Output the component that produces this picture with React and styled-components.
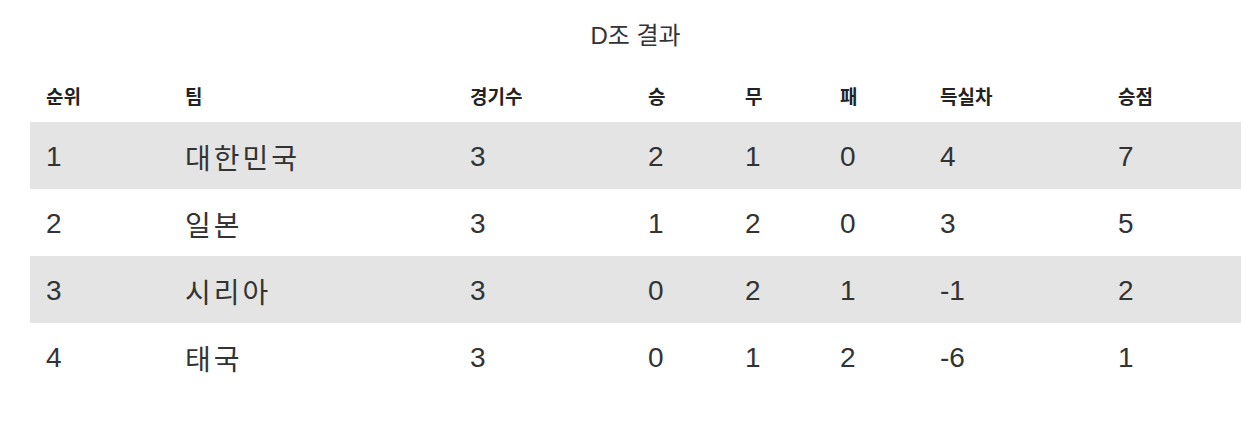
import styled, { createGlobalStyle } from "styled-components";

const GlobalStyle = createGlobalStyle`
    body {
        margin: 0;
        background: #fff;
        font-family: "Liberation Sans", "Noto Sans CJK KR", sans-serif;
        color: #333;
    }
`;

const Page = styled.div`
    padding-left: 30px;
`;

const Table = styled.table`
    width: 1211px;
    border-collapse: collapse;
    table-layout: fixed;
`;

const Caption = styled.caption`
    height: 72px;
    line-height: 72px;
    font-size: 24px;
    color: #333;
    text-align: center;
`;

const HeadCell = styled.th`
    width: ${(p) => p.$w - 16}px;
    height: 47px;
    padding: 0 0 3px 16px;
    text-align: left;
    font-size: 19px;
    font-weight: bold;
    color: #222;
    vertical-align: middle;
`;

const Row = styled.tr`
    background: ${(p) => (p.$shade ? "#e4e4e4" : "#fff")};
`;

const Cell = styled.td`
    height: 65px;
    padding: 2px 0 0 16px;
    font-size: 28px;
    letter-spacing: ${(p) => (p.$team ? "3px" : "0")};
    color: #333;
    vertical-align: middle;
`;

const columns = [
    { label: "순위", w: 139 },
    { label: "팀", w: 285 },
    { label: "경기수", w: 178 },
    { label: "승", w: 97 },
    { label: "무", w: 95 },
    { label: "패", w: 100 },
    { label: "득실차", w: 178 },
    { label: "승점", w: 139 },
];

const rows = [
    [1, "대한민국", 3, 2, 1, 0, 4, 7],
    [2, "일본", 3, 1, 2, 0, 3, 5],
    [3, "시리아", 3, 0, 2, 1, -1, 2],
    [4, "태국", 3, 0, 1, 2, -6, 1],
];

function App() {
    return (
        <>
            <GlobalStyle />
            <Page>
                <Table>
                    <Caption>D조 결과</Caption>
                    <thead>
                        <tr>
                            {columns.map((c) => (
                                <HeadCell key={c.label} $w={c.w}>
                                    {c.label}
                                </HeadCell>
                            ))}
                        </tr>
                    </thead>
                    <tbody>
                        {rows.map((r, i) => (
                            <Row key={r[0]} $shade={i % 2 === 0}>
                                {r.map((v, j) => (
                                    <Cell key={j} $team={j === 1}>
                                        {v}
                                    </Cell>
                                ))}
                            </Row>
                        ))}
                    </tbody>
                </Table>
            </Page>
        </>
    );
}

export default App;
